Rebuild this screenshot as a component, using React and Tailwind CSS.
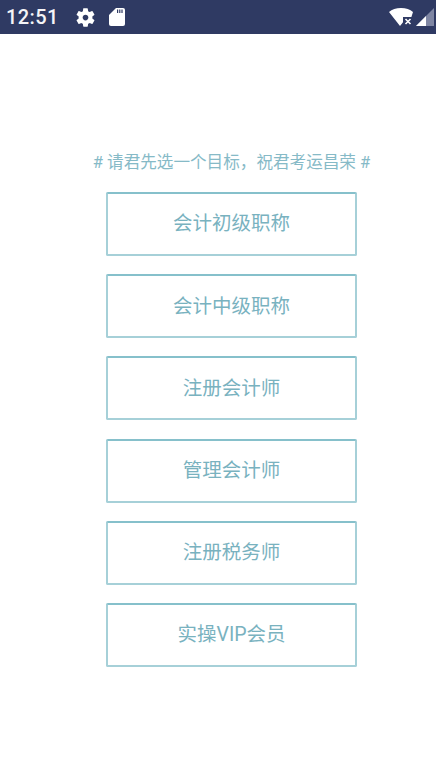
import React from 'react';

const items = ['会计初级职称', '会计中级职称', '注册会计师', '管理会计师', '注册税务师', '实操VIP会员'];
const font = "font-['Roboto','Noto_Sans_CJK_SC',sans-serif]";

const StatusBar = () => (
    <div className="flex h-[34px] items-center bg-[#2f3a63] pl-[6px] pr-[2px] text-white">
        <span className="text-[20px] font-medium leading-none tracking-[0.4px] opacity-95">12:51</span>
        <svg viewBox="0 0 24 24" className="ml-[15px] h-[23px] w-[23px]" fill="#fff" fillRule="evenodd">
            <path d="M19.14 12.94c.04-.3.06-.61.06-.94 0-.32-.02-.64-.07-.94l2.03-1.58a.49.49 0 0 0 .12-.61l-1.92-3.32a.488.488 0 0 0-.59-.22l-2.39.96c-.5-.38-1.03-.7-1.62-.94l-.36-2.54a.484.484 0 0 0-.48-.41h-3.84c-.24 0-.43.17-.47.41l-.36 2.54c-.59.24-1.13.57-1.62.94l-2.39-.96c-.22-.08-.47 0-.59.22L2.74 8.87c-.12.21-.08.47.12.61l2.03 1.58c-.05.3-.09.63-.09.94s.02.64.07.94l-2.03 1.58a.49.49 0 0 0-.12.61l1.92 3.32c.12.22.37.29.59.22l2.39-.96c.5.38 1.03.7 1.62.94l.36 2.54c.05.24.24.41.48.41h3.84c.24 0 .44-.17.47-.41l.36-2.54c.59-.24 1.13-.56 1.62-.94l2.39.96c.22.08.47 0 .59-.22l1.92-3.32c.12-.22.07-.47-.12-.61l-2.01-1.58zM12 15c-1.65 0-3-1.35-3-3s1.35-3 3-3 3 1.35 3 3-1.35 3-3 3z" />
        </svg>
        <svg viewBox="0 0 16 18" className="ml-[12px] h-[18px] w-[16px]" fill="#fff">
            <path d="M7 0h7a2 2 0 0 1 2 2v14a2 2 0 0 1-2 2H2a2 2 0 0 1-2-2V7z" />
            <path d="M8 1.5h1.2v3.5H8zM10.2 1.5h1.2v3.5h-1.2zM12.4 1.5h1.2v3.5h-1.2z" fill="#2f3a63" />
        </svg>
        <div className="ml-auto flex items-center">
            <svg viewBox="0 0 24 18" className="h-[18px] w-[24px]">
                <path d="M12 0C7 0 3 1.6 0 4l11 14 3-3.8V9h8.4L24 4C21 1.6 17 0 12 0z" fill="#fff" />
                <path d="M16.5 11l5 5M21.5 11l-5 5" stroke="#fff" strokeWidth="1.6" />
            </svg>
            <svg viewBox="0 0 18 18" className="ml-[3px] h-[18px] w-[18px]">
                <path d="M0 18L18 0v18z" fill="#7f86a3" />
                <path d="M0 18L10 8v10z" fill="#fff" />
            </svg>
        </div>
    </div>
);

export default function App() {
    return (
        <div className={`flex h-[761px] w-[436px] flex-col bg-white ${font}`}>
            <StatusBar />
            <div className="flex flex-col items-center pt-[118px] pl-[27px]">
                <p className="text-center text-[16.6px] leading-[22px] text-[#86bac7] whitespace-nowrap">
                    # 请君先选一个目标，祝君考运昌荣 #
                </p>
                <div className="mt-[18px] flex flex-col items-center gap-[18.2px]">
                    {items.map((item) => (
                        <button
                            key={item}
                            className="flex h-[64px] w-[251px] items-center justify-center rounded-[2px] border-[2px] border-[#a6d0d8] border-t-[#86c0cb] text-[19.5px] text-[#79b2bf]"
                        >
                            {item}
                        </button>
                    ))}
                </div>
            </div>
        </div>
    );
}
